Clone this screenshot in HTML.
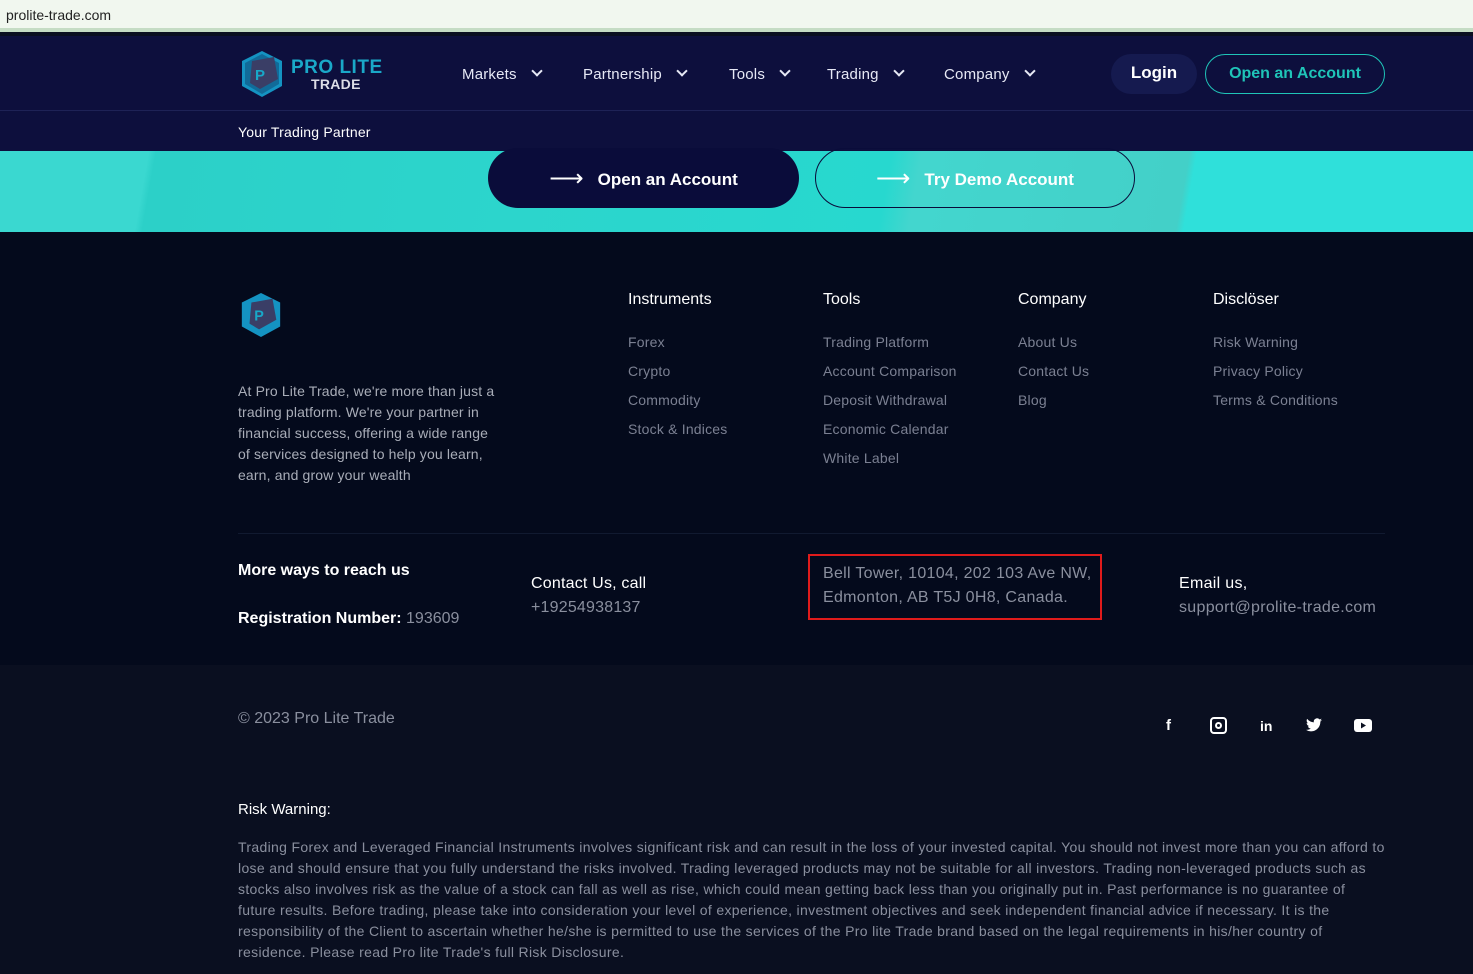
<!DOCTYPE html>
<html><head><meta charset="utf-8"><style>
*{margin:0;padding:0;box-sizing:border-box}
body{width:1473px;height:974px;overflow:hidden;font-family:"Liberation Sans",Arial,sans-serif;background:#0a0f20;position:relative}
.abs{position:absolute}
.url{top:0;left:0;width:1473px;height:32px;background:#f1f7ef;border-bottom:4px solid #c5dcc4}
.url span{position:absolute;left:6px;top:7px;font-size:14px;color:#222}
.hdr{top:36px;left:0;width:1473px;height:115px;background:#0d0f3d}
.hline{top:110px;left:0;width:1473px;height:1px;background:#1e2256}
.nav{font-size:15px;color:#e6e8f5;top:66px;letter-spacing:.2px}
.chev{display:inline-block;width:8px;height:8px;border-right:2px solid #e6e8f5;border-bottom:2px solid #e6e8f5;transform:rotate(45deg);margin-left:16px;position:relative;top:-4px}
.hero{top:151px;left:0;width:1473px;height:81px;background:linear-gradient(100deg,#3ad8d0 0%,#3ad8d0 10%,#2cd0c8 10.5%,#2cd5cc 35%,#27d8cf 60%,#43d6ce 62%,#43d0c8 80%,#2fe0da 80.5%,#2fe0da 100%)}
.foot{top:232px;left:0;width:1473px;height:433px;background:#040a1c}
.h{color:#fff;font-size:16px;top:291px}
.l{color:#7b8092;font-size:14px;letter-spacing:.2px}
.g{color:#8a8f9e}
.arr{font-size:24px;font-weight:normal;position:relative;top:1px;margin-right:14px}
</style></head><body>
<div class="abs url"><span>prolite-trade.com</span></div>
<div class="abs hdr"></div>
<div class="abs hline"></div>
<svg class="abs" style="left:238px;top:49px" width="48" height="50" viewBox="0 0 48 50"><path d="M24 2 L44 12 L44 37 L24 48 L4 37 L4 12Z" fill="#1493c2"/><path d="M24 5 L41 14 L41 35 L24 45 L7 35 L7 14Z" fill="#0d0f3d" opacity=".3"/><path d="M14 12 L36 8 L40 30 L22 40 L12 34Z" fill="#3a3e66"/><text x="17" y="31" font-family="Liberation Sans" font-weight="bold" font-size="15" fill="#18a8c8">P</text></svg>
<div class="abs" style="left:291px;top:57px;font:bold 19px 'Liberation Sans';color:#1aa8c8;letter-spacing:.5px">PRO LITE</div>
<div class="abs" style="left:311px;top:76px;font:bold 14px 'Liberation Sans';color:#dcdde6;letter-spacing:.3px">TRADE</div>
<div class="abs nav" style="left:462px">Markets<span class="chev"></span></div>
<div class="abs nav" style="left:583px">Partnership<span class="chev"></span></div>
<div class="abs nav" style="left:729px">Tools<span class="chev"></span></div>
<div class="abs nav" style="left:827px">Trading<span class="chev"></span></div>
<div class="abs nav" style="left:944px">Company<span class="chev"></span></div>
<div class="abs" style="left:1111px;top:54px;width:86px;height:40px;border-radius:20px;background:#151a4f;color:#fff;font:bold 17px 'Liberation Sans';text-align:center;line-height:38px">Login</div>
<div class="abs" style="left:1205px;top:54px;width:180px;height:40px;border-radius:20px;border:1px solid #1fc4b8;color:#1fc4b8;font:bold 16px 'Liberation Sans';text-align:center;line-height:37px">Open an Account</div>
<div class="abs" style="left:238px;top:124px;color:#fff;font-size:14px;letter-spacing:.2px">Your Trading Partner</div>
<div class="abs hero"></div>
<div class="abs" style="left:488px;top:148px;width:311px;height:60px;border-radius:30px;background:#0a0c3a;color:#fff;font:bold 17px 'Liberation Sans';line-height:60px;text-align:center"><span class="arr">⟶</span>Open an Account</div>
<div class="abs" style="left:815px;top:148px;width:320px;height:60px;border-radius:30px;border:1px solid #0a0c3a;color:#fff;font:bold 17px 'Liberation Sans';line-height:58px;text-align:center"><span class="arr">⟶</span>Try Demo Account</div>
<div class="abs foot"></div>
<svg class="abs" style="left:238px;top:291px" width="46" height="48" viewBox="0 0 48 50"><path d="M24 2 L44 12 L44 37 L24 48 L4 37 L4 12Z" fill="#1493c2"/><path d="M14 12 L36 8 L40 30 L22 40 L12 34Z" fill="#3a3e66"/><text x="17" y="31" font-family="Liberation Sans" font-weight="bold" font-size="15" fill="#18a8c8">P</text></svg>
<div class="abs" style="left:238px;top:381px;width:266px;color:#a9adb8;font-size:14px;line-height:21px;letter-spacing:.15px">At Pro Lite Trade, we're more than just a trading platform. We're your partner in financial success, offering a wide range of services designed to help you learn, earn, and grow your wealth</div>
<div class="abs h" style="left:628px">Instruments</div>
<div class="abs h" style="left:823px">Tools</div>
<div class="abs h" style="left:1018px">Company</div>
<div class="abs h" style="left:1213px">Disclöser</div>
<div class="abs l" style="left:628px;top:328px;line-height:29px">Forex<br>Crypto<br>Commodity<br>Stock &amp; Indices</div>
<div class="abs l" style="left:823px;top:328px;line-height:29px">Trading Platform<br>Account Comparison<br>Deposit Withdrawal<br>Economic Calendar<br>White Label</div>
<div class="abs l" style="left:1018px;top:328px;line-height:29px">About Us<br>Contact Us<br>Blog</div>
<div class="abs l" style="left:1213px;top:328px;line-height:29px">Risk Warning<br>Privacy Policy<br>Terms &amp; Conditions</div>
<div class="abs" style="left:238px;top:533px;width:1147px;height:1px;background:#111a30"></div>
<div class="abs" style="left:238px;top:562px;color:#fff;font:bold 16px 'Liberation Sans'">More ways to reach us</div>
<div class="abs" style="left:238px;top:610px;color:#fff;font:bold 16px 'Liberation Sans'">Registration Number: <span style="font-weight:normal" class="g">193609</span></div>
<div class="abs" style="left:531px;top:572px;color:#fff;font-size:16px;line-height:24px;letter-spacing:.2px">Contact Us, call<br><span class="g">+19254938137</span></div>
<div class="abs" style="left:808px;top:554px;width:294px;height:66px;border:2px solid #e01b1b"></div>
<div class="abs g" style="left:823px;top:562px;font-size:16px;line-height:24px;letter-spacing:.3px">Bell Tower, 10104, 202 103 Ave NW,<br>Edmonton, AB T5J 0H8, Canada.</div>
<div class="abs" style="left:1179px;top:572px;color:#fff;font-size:16px;line-height:24px;letter-spacing:.3px">Email us,<br><span class="g">support@prolite-trade.com</span></div>
<div class="abs g" style="left:238px;top:710px;font-size:16px">© 2023 Pro Lite Trade</div>
<div class="abs" style="left:1166px;top:717px;color:#fff;font:bold 15px 'Liberation Sans'">f</div>
<div class="abs" style="left:1210px;top:717px;width:17px;height:17px;border:2px solid #fff;border-radius:4px"><div style="position:absolute;left:3px;top:3px;width:7px;height:7px;border:2px solid #fff;border-radius:50%"></div></div>
<div class="abs" style="left:1260px;top:718px;color:#fff;font:bold 14px 'Liberation Sans'">in</div>
<svg class="abs" style="left:1306px;top:718px" width="16" height="14" viewBox="0 0 24 20"><path d="M24 2.4a10 10 0 0 1-2.8.8A5 5 0 0 0 23.3.4a10 10 0 0 1-3.1 1.2A4.9 4.9 0 0 0 11.8 6 14 14 0 0 1 1.7.9a4.9 4.9 0 0 0 1.5 6.6A4.9 4.9 0 0 1 1 6.9a4.9 4.9 0 0 0 3.9 4.8 5 5 0 0 1-2.2.1 4.9 4.9 0 0 0 4.6 3.4A9.9 9.9 0 0 1 0 17.3 14 14 0 0 0 7.5 19.5c9 0 14-7.5 14-14v-.6A10 10 0 0 0 24 2.4z" fill="#fff"/></svg>
<svg class="abs" style="left:1354px;top:719px" width="18" height="13" viewBox="0 0 18 13"><rect width="18" height="13" rx="3" fill="#fff"/><path d="M7 3.5 L12 6.5 L7 9.5Z" fill="#0a0f20"/></svg>
<div class="abs" style="left:238px;top:801px;color:#fff;font-size:15px">Risk Warning:</div>
<div class="abs" style="left:238px;top:837px;width:1148px;color:#8a8f9e;font-size:14px;line-height:21px;letter-spacing:.33px">Trading Forex and Leveraged Financial Instruments involves significant risk and can result in the loss of your invested capital. You should not invest more than you can afford to lose and should ensure that you fully understand the risks involved. Trading leveraged products may not be suitable for all investors. Trading non-leveraged products such as stocks also involves risk as the value of a stock can fall as well as rise, which could mean getting back less than you originally put in. Past performance is no guarantee of future results. Before trading, please take into consideration your level of experience, investment objectives and seek independent financial advice if necessary. It is the responsibility of the Client to ascertain whether he/she is permitted to use the services of the Pro lite Trade brand based on the legal requirements in his/her country of residence. Please read Pro lite Trade's full Risk Disclosure.</div>
</body></html>
